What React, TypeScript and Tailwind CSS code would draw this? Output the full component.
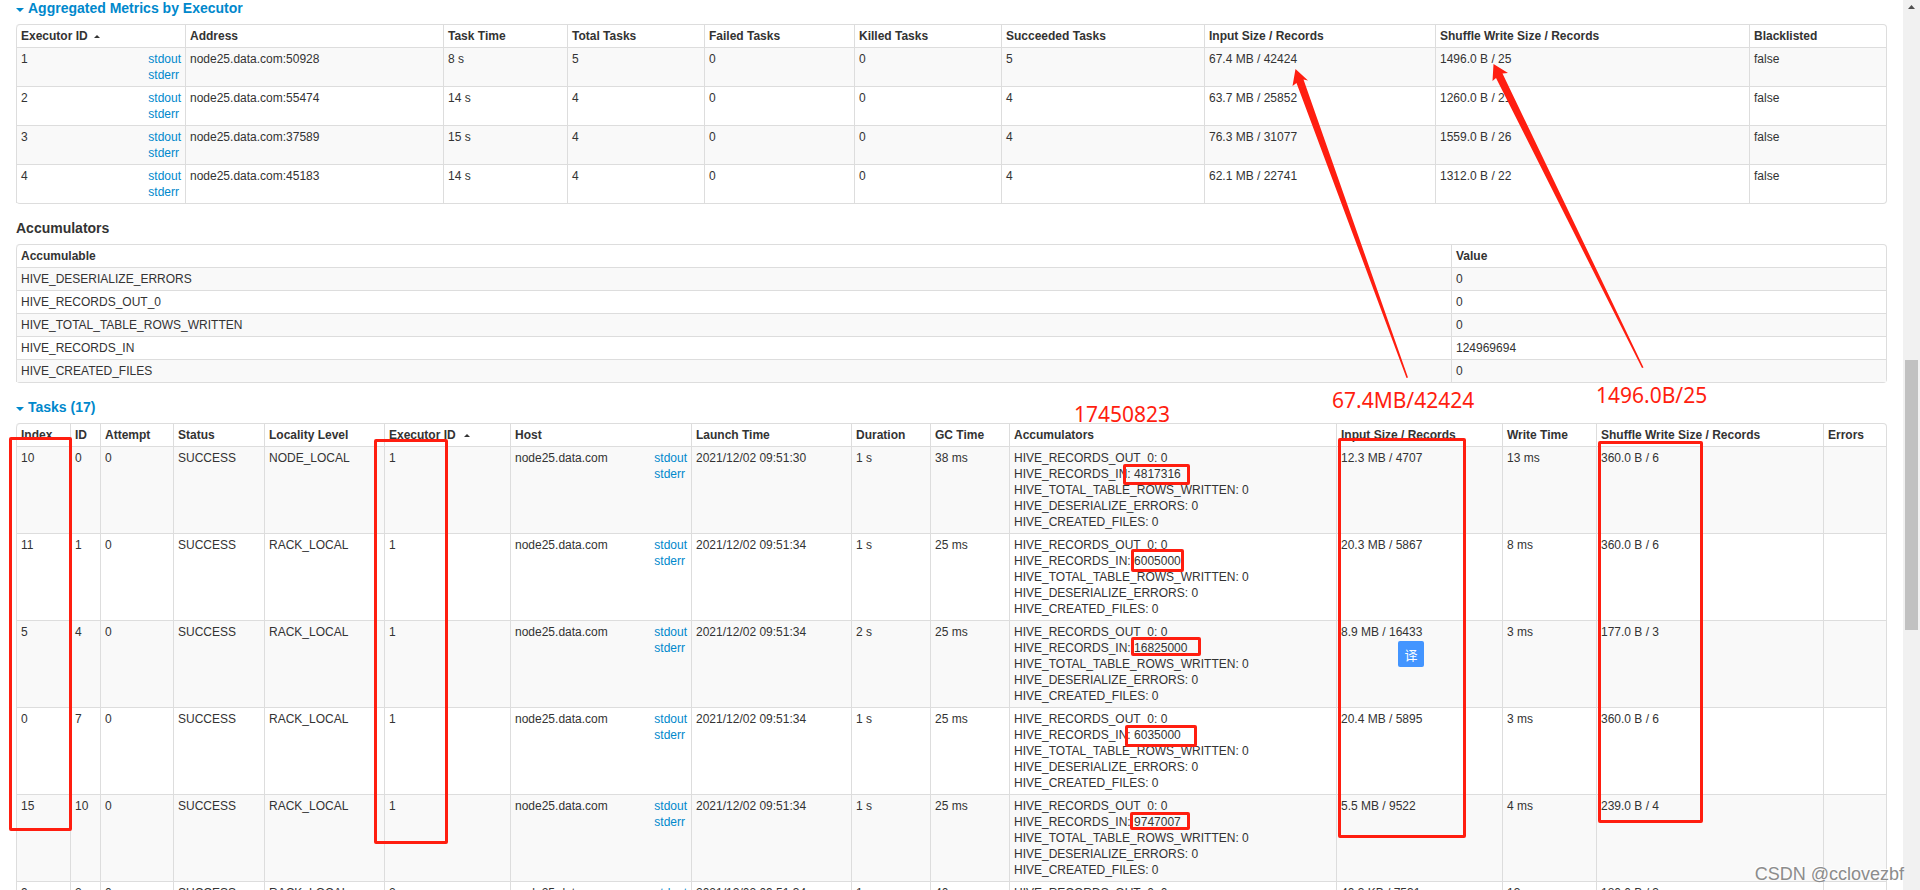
import { type FC, type ReactNode } from "react";

interface Executor {
  id: string;
  address: string;
  time: string;
  total: string;
  input: string;
  shuffle: string;
}

interface Task {
  index: string;
  id: string;
  locality: string;
  executor: string;
  launch: string;
  duration: string;
  gc: string;
  recordsIn: string;
  input: string;
  write: string;
  shuffle: string;
}

const executors: Executor[] = [
  { id: "1", address: "node25.data.com:50928", time: "8 s", total: "5", input: "67.4 MB / 42424", shuffle: "1496.0 B / 25" },
  { id: "2", address: "node25.data.com:55474", time: "14 s", total: "4", input: "63.7 MB / 25852", shuffle: "1260.0 B / 21" },
  { id: "3", address: "node25.data.com:37589", time: "15 s", total: "4", input: "76.3 MB / 31077", shuffle: "1559.0 B / 26" },
  { id: "4", address: "node25.data.com:45183", time: "14 s", total: "4", input: "62.1 MB / 22741", shuffle: "1312.0 B / 22" },
];

const accumulables = [
  ["HIVE_DESERIALIZE_ERRORS", "0"],
  ["HIVE_RECORDS_OUT_0", "0"],
  ["HIVE_TOTAL_TABLE_ROWS_WRITTEN", "0"],
  ["HIVE_RECORDS_IN", "124969694"],
  ["HIVE_CREATED_FILES", "0"],
];

const tasks: Task[] = [
  { index: "10", id: "0", locality: "NODE_LOCAL", executor: "1", launch: "2021/12/02 09:51:30", duration: "1 s", gc: "38 ms", recordsIn: "4817316", input: "12.3 MB / 4707", write: "13 ms", shuffle: "360.0 B / 6" },
  { index: "11", id: "1", locality: "RACK_LOCAL", executor: "1", launch: "2021/12/02 09:51:34", duration: "1 s", gc: "25 ms", recordsIn: "6005000", input: "20.3 MB / 5867", write: "8 ms", shuffle: "360.0 B / 6" },
  { index: "5", id: "4", locality: "RACK_LOCAL", executor: "1", launch: "2021/12/02 09:51:34", duration: "2 s", gc: "25 ms", recordsIn: "16825000", input: "8.9 MB / 16433", write: "3 ms", shuffle: "177.0 B / 3" },
  { index: "0", id: "7", locality: "RACK_LOCAL", executor: "1", launch: "2021/12/02 09:51:34", duration: "1 s", gc: "25 ms", recordsIn: "6035000", input: "20.4 MB / 5895", write: "3 ms", shuffle: "360.0 B / 6" },
  { index: "15", id: "10", locality: "RACK_LOCAL", executor: "1", launch: "2021/12/02 09:51:34", duration: "1 s", gc: "25 ms", recordsIn: "9747007", input: "5.5 MB / 9522", write: "4 ms", shuffle: "239.0 B / 4" },
  { index: "9", id: "2", locality: "RACK_LOCAL", executor: "2", launch: "2021/12/02 09:51:34", duration: "1 s", gc: "40 ms", recordsIn: "7520000", input: "40.3 KB / 7531", write: "13 ms", shuffle: "180.0 B / 3" },
];

const marks = [
  "left-[9px] top-[437px] w-[63px] h-[394px]",
  "left-[374px] top-[439px] w-[74px] h-[405px]",
  "left-[1338px] top-[438px] w-[128px] h-[400px]",
  "left-[1598px] top-[441px] w-[105px] h-[382px]",
  "left-[1123px] top-[464px] w-[67px] h-[21px]",
  "left-[1131px] top-[549px] w-[53px] h-[23px]",
  "left-[1131px] top-[637px] w-[70px] h-[19px]",
  "left-[1125px] top-[725px] w-[72px] h-[22px]",
  "left-[1130px] top-[812px] w-[60px] h-[18px]",
];

const SortArrow: FC = () => (
  <svg className="inline-block w-[6px] h-[3px] align-middle" viewBox="0 0 6 3">
    <path d="M3 0 6 3H0z" fill="#333" />
  </svg>
);

const Caret: FC = () => (
  <svg className="w-[8px] h-[4px] mt-1" viewBox="0 0 8 4">
    <path d="M0 0h8L4 4z" fill="#0088cc" />
  </svg>
);

const Logs: FC = () => (
  <div className="flex flex-col">
    <a href="#stdout" className="text-[#0088cc]">stdout</a>
    <a href="#stderr" className="text-[#0088cc]">stderr</a>
  </div>
);

const Th: FC<{ children: ReactNode }> = ({ children }) => (
  <th className="border-l border-[#ddd] px-1 py-[3px] text-left font-bold whitespace-nowrap first:rounded-tl">
    {children}
  </th>
);

const Td: FC<{ children?: ReactNode }> = ({ children }) => (
  <td className="border-l border-t border-[#ddd] px-1 py-[3px] align-top whitespace-nowrap">
    {children}
  </td>
);

const Table: FC<{ cols: string[]; head: ReactNode[]; children: ReactNode }> = ({ cols, head, children }) => (
  <table className="w-full table-fixed border-separate border-spacing-0 border border-l-0 border-[#ddd] rounded mb-4">
    <colgroup>
      {cols.map((c, i) => (
        <col key={i} className={c} />
      ))}
    </colgroup>
    <thead>
      <tr>
        {head.map((h, i) => (
          <Th key={i}>{h}</Th>
        ))}
      </tr>
    </thead>
    <tbody>{children}</tbody>
  </table>
);

const Toggle: FC<{ children: ReactNode }> = ({ children }) => (
  <h4 className="mb-2 text-sm leading-4 font-bold">
    <button className="flex items-center gap-1 text-[#0088cc] cursor-pointer">
      <Caret />
      {children}
    </button>
  </h4>
);

const Annotations: FC = () => (
  <div className="absolute inset-0 overflow-hidden pointer-events-none font-['Noto_Sans',sans-serif] text-[21px] leading-6 text-[#ff1e10]">
    {marks.map((m) => (
      <div key={m} className={`absolute border-3 border-[#ff1e10] rounded-xs ${m}`} />
    ))}
    <svg className="absolute left-0 top-0 w-[1903px] h-[440px]" viewBox="0 0 1903 440" fill="#ff1e10">
      <path d="M1295.5 69 1308 80.5 1303.5 79.5 1408 377.5 1406.5 378 1296.5 83 1292.5 86z" />
      <path d="M1493.5 64 1508 73 1502.5 73.5 1643.5 367.5 1642 368 1496 78 1492.5 81z" />
    </svg>
    <p className="absolute left-[1074px] top-[402px]">17450823</p>
    <p className="absolute left-[1332px] top-[388px]">67.4MB/42424</p>
    <p className="absolute left-[1596px] top-[383px]">1496.0B/25</p>
  </div>
);

export default function App() {
  return (
    <div className="relative flex h-screen overflow-hidden bg-white text-[#333] text-xs leading-4 font-['Liberation_Sans',Arial,sans-serif]">
      <main className="flex-1 min-w-0 px-4">
        <Toggle>Aggregated Metrics by Executor</Toggle>
        <Table
          cols={["w-[169px]", "w-[258px]", "w-[124px]", "w-[137px]", "w-[150px]", "w-[147px]", "w-[203px]", "w-[231px]", "w-[314px]", "w-[137px]"]}
          head={[
            <span key="id" className="flex items-center gap-1.5">Executor ID <SortArrow /></span>,
            "Address",
            "Task Time",
            "Total Tasks",
            "Failed Tasks",
            "Killed Tasks",
            "Succeeded Tasks",
            "Input Size / Records",
            "Shuffle Write Size / Records",
            "Blacklisted",
          ]}
        >
          {executors.map((e) => (
            <tr key={e.id} className="odd:bg-[#f9f9f9]">
              <Td>
                <div className="flex justify-between">{e.id}<Logs /></div>
              </Td>
              <Td>{e.address}</Td>
              <Td>{e.time}</Td>
              <Td>{e.total}</Td>
              <Td>0</Td>
              <Td>0</Td>
              <Td>{e.total}</Td>
              <Td>{e.input}</Td>
              <Td>{e.shuffle}</Td>
              <Td>false</Td>
            </tr>
          ))}
        </Table>

        <h4 className="mb-2 text-sm leading-4 font-bold">Accumulators</h4>
        <Table cols={["w-[1435px]", "w-[435px]"]} head={["Accumulable", "Value"]}>
          {accumulables.map(([name, value]) => (
            <tr key={name} className="odd:bg-[#f9f9f9]">
              <Td>{name}</Td>
              <Td>{value}</Td>
            </tr>
          ))}
        </Table>

        <Toggle>Tasks (17)</Toggle>
        <Table
          cols={["w-[54px]", "w-[30px]", "w-[73px]", "w-[91px]", "w-[120px]", "w-[126px]", "w-[181px]", "w-[160px]", "w-[79px]", "w-[79px]", "w-[327px]", "w-[166px]", "w-[94px]", "w-[227px]", "w-[63px]"]}
          head={[
            "Index",
            "ID",
            "Attempt",
            "Status",
            "Locality Level",
            <span key="ex" className="flex items-center gap-2">Executor ID <SortArrow /></span>,
            "Host",
            "Launch Time",
            "Duration",
            "GC Time",
            "Accumulators",
            "Input Size / Records",
            "Write Time",
            "Shuffle Write Size / Records",
            "Errors",
          ]}
        >
          {tasks.map((t) => (
            <tr key={t.id} className="odd:bg-[#f9f9f9]">
              <Td>{t.index}</Td>
              <Td>{t.id}</Td>
              <Td>0</Td>
              <Td>SUCCESS</Td>
              <Td>{t.locality}</Td>
              <Td>{t.executor}</Td>
              <Td>
                <div className="flex justify-between">node25.data.com<Logs /></div>
              </Td>
              <Td>{t.launch}</Td>
              <Td>{t.duration}</Td>
              <Td>{t.gc}</Td>
              <Td>
                HIVE_RECORDS_OUT_0: 0
                <br />
                HIVE_RECORDS_IN: {t.recordsIn}
                <br />
                HIVE_TOTAL_TABLE_ROWS_WRITTEN: 0
                <br />
                HIVE_DESERIALIZE_ERRORS: 0
                <br />
                HIVE_CREATED_FILES: 0
              </Td>
              <Td>{t.input}</Td>
              <Td>{t.write}</Td>
              <Td>{t.shuffle}</Td>
              <Td />
            </tr>
          ))}
        </Table>
      </main>

      {/* scrollbar */}
      <div className="w-[17px] shrink-0 bg-[#f1f1f1] flex flex-col items-center">
        <svg className="w-[7px] h-[4px] mt-[5px] shrink-0" viewBox="0 0 7 4">
          <path d="M3.5 0 7 4H0z" fill="#505050" />
        </svg>
        <div className="mt-[351px] w-[13px] h-[270px] shrink-0 bg-[#c1c1c1]" />
      </div>

      <Annotations />
      <button
        lang="zh-CN"
        className="absolute left-[1398px] top-[641px] size-[26px] rounded-xs bg-[#4395ff] text-white text-[13px] leading-none text-center font-['Noto_Sans_CJK_SC',sans-serif]"
      >
        译
      </button>
      <p className="absolute right-4 bottom-1 text-lg leading-6 text-[#8c8c8c] text-shadow-[-1px_-1px_0_#fff]">
        CSDN @cclovezbf
      </p>
    </div>
  );
}
